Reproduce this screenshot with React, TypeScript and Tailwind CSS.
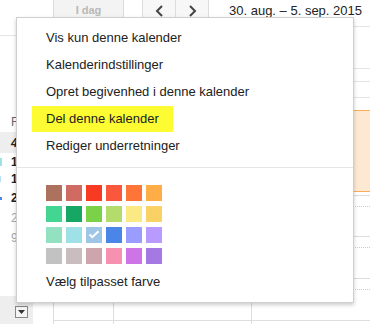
import React from "react";

const swatches: string[][] = [
  ["#ac725e", "#d06b64", "#f83a22", "#fa573c", "#ff7537", "#ffad46"],
  ["#42d692", "#16a765", "#7bd148", "#b3dc6c", "#fbe983", "#fad165"],
  ["#92e1c0", "#9fe1e7", "#9fc6e7", "#4986e7", "#9a9cff", "#b99aff"],
  ["#c2c2c2", "#cabdbf", "#cca6ac", "#f691b2", "#cd74e6", "#a47ae2"],
];

function RowStack({ event }: { event?: boolean }) {
  return (
    <div className="flex flex-col">
      <div className="h-[5px] border-b border-[#e4e4e4]" />
      <div className="h-[42px] border-b border-[#e4e4e4]" />
      <div className="h-[13px] border-b border-[#e4e4e4]" />
      <div className="h-[16px] border-b border-[#e4e4e4]" />
      <div className="h-[12px]" />
      {event ? (
        <div className="h-[82px] bg-[#fde9d2] border-t border-b border-[#f9ad56]" />
      ) : (
        <div className="h-[82px]" />
      )}
      <div className="h-[4px] border-b border-[#dddddd]" />
      <div className="h-[11px] border-b border-dotted border-[#cccccc]" />
      <div className="h-[30px] border-b border-[#dddddd]" />
      <div className="h-[11px] border-b border-dotted border-[#cccccc]" />
      <div className="h-[31px] border-b border-[#dddddd]" />
      <div className="h-[11px] border-b border-dotted border-[#cccccc]" />
      <div className="h-[31px] border-b border-[#dddddd]" />
    </div>
  );
}

export default function App() {
  const items = [
    "Vis kun denne kalender",
    "Kalenderindstillinger",
    "Opret begivenhed i denne kalender",
  ];
  return (
    <div className="relative w-[370px] h-[324px] overflow-hidden bg-white font-['Liberation_Sans',Arial,sans-serif] text-[#222]">
      <div className="flex h-full">
        {/* Sidebar */}
        <div className="w-[53px] shrink-0 flex flex-col">
          <div className="h-[36px] border-b border-[#e5e5e5]" />
          <div className="h-[76px]" />
          <div className="h-[20px] flex items-center pl-[11px] text-[12px] text-[#666]">F</div>
          <div className="h-[21px] flex items-center pl-[11px] text-[12px] font-bold italic bg-[#eeeeee]">4</div>
          <div className="h-[17px] flex items-center text-[12px] font-bold">
            <span className="w-[2px] h-[8px] bg-[#9fe1e7] mr-[9px]" />1
          </div>
          <div className="h-[18px] flex items-center text-[12px] font-bold">
            <span className="w-[1px] h-[6px] bg-[#b9dff5] mr-[10px]" />1
          </div>
          <div className="h-[20px] flex items-center text-[12px] font-bold">
            <span className="w-[2px] h-[3px] bg-[#4986e7] mr-[9px]" />2
          </div>
          <div className="h-[20px] flex items-center pl-[11px] text-[12px] text-[#aaa]">2</div>
          <div className="h-[19px] flex items-center pl-[11px] text-[12px] text-[#aaa]">9</div>
          <div className="flex-1" />
          <div className="h-[28px] w-[33px] bg-[#eeeeee] pt-[10px] pl-[15px]">
            <div className="w-[13px] h-[12px] border border-[#888] bg-[#f5f5f5] flex items-center justify-center">
              <svg width="7" height="4" viewBox="0 0 7 4">
                <path d="M0 0 L7 0 L3.5 4 Z" fill="#333" />
              </svg>
            </div>
          </div>
        </div>

        {/* Main */}
        <div className="flex-1 flex flex-col">
          <div className="h-[22px] flex items-start shrink-0">
            <div className="w-[71px] h-[22px] border border-t-0 border-[#dcdcdc] bg-[#f3f3f3] rounded-b-[2px] flex items-center justify-center text-[11px] font-bold text-[#b8b8b8]">
              I dag
            </div>
            <div className="w-[18px]" />
            <div className="flex h-[22px]">
              <div className="w-[34px] h-[22px] border border-t-0 border-[#dcdcdc] bg-[#f7f7f7] flex items-center justify-center">
                <svg width="9" height="12" viewBox="0 0 9 12">
                  <path d="M7 1 L2 6 L7 11" stroke="#444" strokeWidth="2" fill="none" />
                </svg>
              </div>
              <div className="w-[33px] h-[22px] border border-t-0 border-l-0 border-[#dcdcdc] bg-[#f7f7f7] flex items-center justify-center">
                <svg width="9" height="12" viewBox="0 0 9 12">
                  <path d="M2 1 L7 6 L2 11" stroke="#444" strokeWidth="2" fill="none" />
                </svg>
              </div>
            </div>
            <div className="pl-[20px] h-[21px] flex items-center text-[13px] text-[#222] whitespace-nowrap">
              30. aug. – 5. sep. 2015
            </div>
          </div>
          <div className="flex flex-1">
            <div className="relative w-[60px] border-l border-[#dddddd]">
              <RowStack />
              <div className="absolute left-[30px] top-[300px] text-[11px] text-[#777]">17.00</div>
            </div>
            <div className="w-[138px] border-l border-[#dddddd]">
              <RowStack />
            </div>
            <div className="flex-1 border-l border-[#dddddd]">
              <RowStack event />
            </div>
          </div>
        </div>
      </div>

      {/* Menu overlay */}
      <div className="absolute left-[16px] top-[17px] w-[338px] h-[286px] bg-white border border-[#cfcfcf] shadow-[0_2px_4px_rgba(0,0,0,0.2)] text-[13px] text-[#222]">
        <div className="pt-[6px]">
          {items.map((t) => (
            <div key={t} className="h-[27px] flex items-center pl-[29px] whitespace-nowrap">
              {t}
            </div>
          ))}
          <div className="h-[27px] flex items-center pl-[15px]">
            <span className="h-[26px] px-[14px] flex items-center bg-[#fdfc33] whitespace-nowrap">
              Del denne kalender
            </span>
          </div>
          <div className="h-[27px] flex items-center pl-[29px] whitespace-nowrap">
            Rediger underretninger
          </div>
          <div className="mt-[8px] h-px bg-[#e5e5e5]" />
          <div className="mt-[17px] pl-[29px] flex flex-col gap-[5px]">
            {swatches.map((row, ri) => (
              <div key={ri} className="flex gap-[4px]">
                {row.map((c, ci) => (
                  <div
                    key={ci}
                    className="w-[16px] h-[16px] flex items-center justify-center"
                    style={{ backgroundColor: c }}
                  >
                    {ri === 2 && ci === 2 ? (
                      <svg width="16" height="16" viewBox="0 0 16 16">
                        <path d="M3.5 7.5 L6.3 10.2 L12.5 4.2" stroke="#fff" strokeWidth="2" fill="none" />
                      </svg>
                    ) : null}
                  </div>
                ))}
              </div>
            ))}
          </div>
          <div className="mt-[4px] h-[27px] flex items-center pl-[29px] whitespace-nowrap">
            Vælg tilpasset farve
          </div>
        </div>
      </div>
    </div>
  );
}
